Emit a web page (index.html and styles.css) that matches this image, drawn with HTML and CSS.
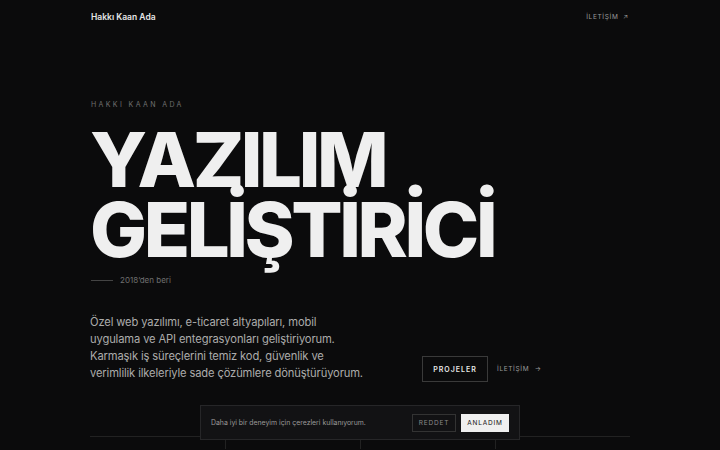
FILE: index.html
```html
<!DOCTYPE html>
<html lang="tr">
<head>
<meta charset="utf-8">
<title>Hakkı Kaan Ada</title>
<link rel="stylesheet" href="styles.css">
</head>
<body>
<header class="topbar">
  <a class="brand" href="#">Hakkı Kaan Ada</a>
  <a class="nav-link" href="#">İLETİŞİM <span class="arrow">↗</span></a>
</header>
<main class="hero">
  <p class="eyebrow">HAKKI KAAN ADA</p>
  <h1 class="title"><span class="title-line">YAZILIM</span><span class="title-line">GELİŞTİRİCİ</span></h1>
  <div class="since"><span class="since-line"></span><span>2018’den beri</span></div>
  <div class="intro-row">
    <p class="intro">Özel web yazılımı, e-ticaret altyapıları, mobil uygulama ve API entegrasyonları geliştiriyorum. Karmaşık iş süreçlerini temiz kod, güvenlik ve verimlilik ilkeleriyle sade çözümlere dönüştürüyorum.</p>
    <div class="actions">
      <a class="btn-outline" href="#">PROJELER</a>
      <a class="btn-text" href="#">İLETİŞİM <span class="arrow">→</span></a>
    </div>
  </div>
  <div class="stats">
    <div class="stat"></div>
    <div class="stat"></div>
    <div class="stat"></div>
    <div class="stat"></div>
  </div>
</main>
<div class="cookie">
  <span class="cookie-text">Daha iyi bir deneyim için çerezleri kullanıyorum.</span>
  <div class="cookie-actions">
    <button class="cookie-reject">REDDET</button>
    <button class="cookie-accept">ANLADIM</button>
  </div>
</div>
</body>
</html>
```
FILE: styles.css
```css
* { box-sizing: border-box; }
html, body { margin: 0; padding: 0; }
body {
  background: #0b0b0c;
  color: #ededed;
  font-family: Inter, "Noto Sans", sans-serif;
  height: 450px;
  overflow: hidden;
}
a { color: inherit; text-decoration: none; }

.topbar {
  width: 540px;
  margin: 0 auto;
  height: 33px;
  display: flex;
  align-items: center;
  justify-content: space-between;
}
.brand {
  font-size: 8.5px;
  font-weight: 600;
  color: #e6e6e6;
  padding-left: 1px;
}
.nav-link {
  font-size: 6.5px;
  letter-spacing: 0.1em;
  color: #9a9a9a;
  padding-right: 2px;
}
.nav-link .arrow { letter-spacing: 0; margin-left: 2px; }

.hero {
  width: 540px;
  margin: 0 auto;
}
.eyebrow {
  margin: 67px 0 0 1px;
  font-size: 7px;
  letter-spacing: 0.34em;
  color: #6f6f6f;
  line-height: 10px;
}
.title {
  margin: 14px 0 0 0;
  font-size: 76px;
  font-weight: 800;
  line-height: 70px;
  letter-spacing: -0.045em;
  color: #efefef;
}
.title-line { display: block; height: 70px; }
.since {
  margin-top: 11px;
  display: flex;
  align-items: center;
  gap: 7px;
  font-size: 8px;
  color: #6f6f6f;
  padding-left: 1px;
}
.since-line {
  display: block;
  width: 22px;
  height: 1px;
  background: #444;
}
.intro-row {
  margin-top: 29px;
  display: flex;
  align-items: flex-end;
}
.intro {
  margin: 0;
  width: 332px;
  padding-right: 58px;
  font-size: 11.2px;
  line-height: 17px;
  letter-spacing: -0.012em;
  color: #ababab;
  flex: none;
}
.actions {
  display: flex;
  align-items: center;
  gap: 9px;
}
.btn-outline {
  display: flex;
  align-items: center;
  justify-content: center;
  width: 66px;
  height: 26px;
  border: 1px solid #3a3a3a;
  font-size: 7px;
  font-weight: 600;
  letter-spacing: 0.14em;
  color: #e6e6e6;
}
.btn-text {
  font-size: 6.5px;
  letter-spacing: 0.1em;
  color: #9a9a9a;
}
.btn-text .arrow { letter-spacing: 0; margin-left: 3px; }

.stats {
  margin-top: 54px;
  border-top: 1px solid #222;
  display: grid;
  grid-template-columns: repeat(4, 1fr);
  height: 13px;
}
.stat { border-left: 1px solid #222; }
.stat:first-child { border-left: none; }

.cookie {
  position: fixed;
  left: 200px;
  bottom: 10px;
  width: 320px;
  height: 35px;
  background: #121214;
  border: 1px solid #262628;
  display: flex;
  align-items: center;
  justify-content: space-between;
  padding: 0 10px;
}
.cookie-text {
  font-size: 6.9px;
  color: #9a9a9a;
}
.cookie-actions { display: flex; gap: 5px; }
.cookie-reject, .cookie-accept {
  font-family: inherit;
  font-size: 6.5px;
  letter-spacing: 0.12em;
  height: 18px;
  padding: 0;
  cursor: pointer;
}
.cookie-reject {
  width: 44px;
  background: transparent;
  border: 1px solid #333;
  color: #8a8a8a;
}
.cookie-accept {
  width: 48px;
  background: #efefef;
  border: 1px solid #efefef;
  color: #111;
}
```
